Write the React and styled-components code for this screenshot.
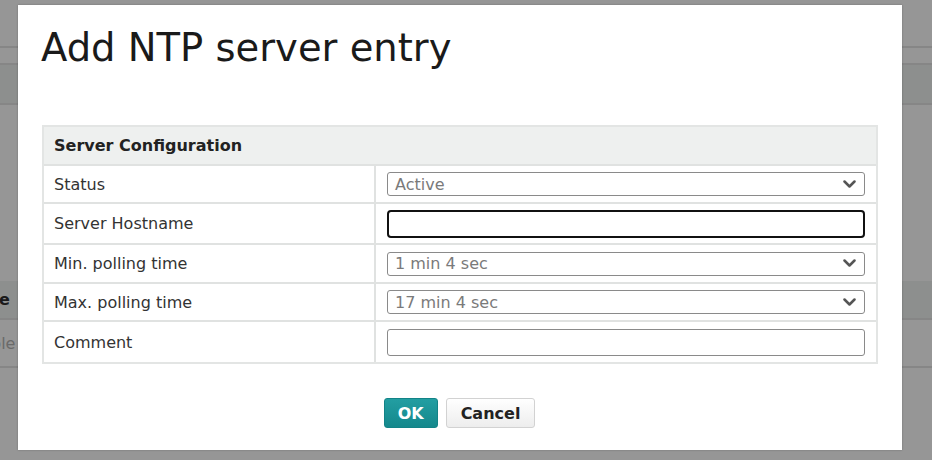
import styled, { createGlobalStyle } from 'styled-components';

const GlobalStyle = createGlobalStyle`
	html, body {
		margin: 0;
		padding: 0;
		background: #969696;
		font-family: "DejaVu Sans", Verdana, sans-serif;
	}
`;

const Screen = styled.div`
	position: relative;
	width: 932px;
	height: 460px;
	overflow: hidden;
	background: #969696;
`;

const BackLine = styled.div`
	height: ${(p) => p.h}px;
	background: ${(p) => (p.dark ? '#8d8f8e' : '#969696')};
	border-bottom: 2px solid #868686;
	display: flex;
	align-items: center;
	font-size: 16px;
	font-weight: ${(p) => (p.bold ? 700 : 400)};
	color: ${(p) => (p.bold ? '#1a1a1a' : '#6a6a6a')};
	padding-left: 0;
`;

const BackText = styled.span`
	margin-left: ${(p) => p.shift}px;
`;

const Spacer = styled.div`
	height: ${(p) => p.h}px;
`;

const Modal = styled.div`
	position: absolute;
	left: 18px;
	top: 5px;
	width: 884px;
	height: 445px;
	background: #fff;
	box-sizing: border-box;
	padding: 20px 24px 0 23px;
	display: flex;
	flex-direction: column;
	box-shadow: 0 0 2px rgba(0, 0, 0, 0.25);
`;

const Title = styled.h1`
	margin: 0;
	font-weight: 400;
	font-size: 38.5px;
	line-height: 46px;
	color: #1a1a1a;
`;

const Table = styled.div`
	margin-top: 54px;
	margin-left: 1px;
	border: 2px solid #e3e5e4;
	display: grid;
	grid-template-columns: 332px 1fr;
`;

const Header = styled.div`
	grid-column: 1 / 3;
	height: 37px;
	background: #eef0ef;
	border-bottom: 2px solid #e0e2e1;
	display: flex;
	align-items: center;
	padding-left: 10px;
	font-weight: 700;
	font-size: 16px;
	color: #222;
`;

const Label = styled.div`
	height: ${(p) => p.h}px;
	border-right: 2px solid #e0e2e1;
	border-bottom: ${(p) => (p.last ? 'none' : '2px solid #e0e2e1')};
	display: flex;
	align-items: center;
	padding-left: 10px;
	font-size: 16px;
	color: #333;
`;

const Field = styled.div`
	height: ${(p) => p.h}px;
	border-bottom: ${(p) => (p.last ? 'none' : '2px solid #e0e2e1')};
	display: flex;
	align-items: center;
	padding: 0 11px 0 11px;
`;

const SelectBox = styled.div`
	flex: 1;
	height: 24px;
	box-sizing: border-box;
	border: 1px solid #8a8a8a;
	border-radius: 3px;
	display: flex;
	align-items: center;
	justify-content: space-between;
	padding: 0 8px 0 7px;
	font-size: 16px;
	color: #7a7a7a;
`;

const TextBox = styled.div`
	flex: 1;
	height: ${(p) => (p.focused ? 28 : 27)}px;
	box-sizing: border-box;
	border: ${(p) => (p.focused ? '2px solid #111' : '1px solid #8a8a8a')};
	border-radius: ${(p) => (p.focused ? 4 : 3)}px;
`;

const Buttons = styled.div`
	margin-top: 34px;
	display: flex;
	justify-content: center;
	gap: 8px;
`;

const Button = styled.div`
	height: 30px;
	box-sizing: border-box;
	border-radius: 3px;
	display: flex;
	align-items: center;
	justify-content: center;
	font-weight: 700;
	font-size: 16px;
	padding: 0 ${(p) => (p.primary ? 13 : 14)}px;
	color: ${(p) => (p.primary ? '#fff' : '#222')};
	background: ${(p) => (p.primary ? 'linear-gradient(#229ea2, #14888c)' : 'linear-gradient(#ffffff, #ededed)')};
	border: 1px solid ${(p) => (p.primary ? '#128387' : '#d2d2d2')};
`;

const Chevron = () => (
	<svg width="13" height="9" viewBox="0 0 13 9">
		<path d="M1.5 1.5 L6.5 6.5 L11.5 1.5" fill="none" stroke="#555" strokeWidth="2.5" strokeLinecap="round" strokeLinejoin="round" />
	</svg>
);

const rows = [
	{ label: 'Status', h: 36, kind: 'select', value: 'Active' },
	{ label: 'Server Hostname', h: 39, kind: 'input', focused: true },
	{ label: 'Min. polling time', h: 37, kind: 'select', value: '1 min 4 sec' },
	{ label: 'Max. polling time', h: 36, kind: 'select', value: '17 min 4 sec' },
	{ label: 'Comment', h: 40, kind: 'input' },
];

export default function App() {
	return (
		<Screen>
			<GlobalStyle />
			<BackLine h={46} />
			<BackLine h={15} />
			<BackLine h={38} dark />
			<Spacer h={176} />
			<BackLine h={37} dark bold>
				<BackText shift={-1}>e</BackText>
			</BackLine>
			<BackLine h={46}>
				<BackText shift={-9}>ble</BackText>
			</BackLine>
			<Modal>
				<Title>Add NTP server entry</Title>
				<Table>
					<Header>Server Configuration</Header>
					{rows.map((r, i) => {
						const last = i === rows.length - 1;
						return [
							<Label key={`l${i}`} h={r.h} last={last}>
								{r.label}
							</Label>,
							<Field key={`f${i}`} h={r.h} last={last}>
								{r.kind === 'select' ? (
									<SelectBox>
										<span>{r.value}</span>
										<Chevron />
									</SelectBox>
								) : (
									<TextBox focused={r.focused} />
								)}
							</Field>,
						];
					})}
				</Table>
				<Buttons>
					<Button primary>OK</Button>
					<Button>Cancel</Button>
				</Buttons>
			</Modal>
		</Screen>
	);
}
